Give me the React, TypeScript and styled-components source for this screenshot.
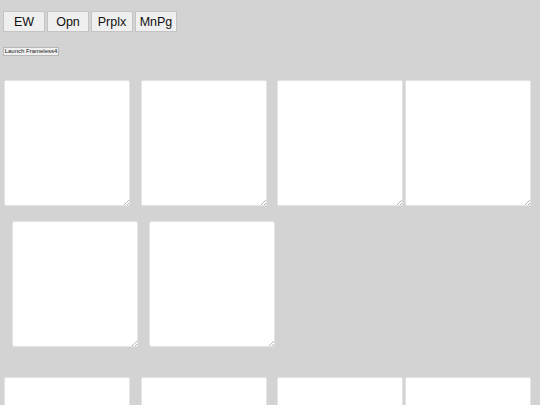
import styled, { createGlobalStyle } from 'styled-components'

const GlobalStyle = createGlobalStyle`
    html, body {
        margin: 0;
        padding: 0;
        background: #d3d3d3;
        font-family: "Liberation Sans", Arial, sans-serif;
    }
`

const Page = styled.div`
    display: flex;
    flex-direction: column;
    padding: 11px 0 0 3px;
`

const Toolbar = styled.div`
    display: flex;
    gap: 2px;
`

const NavButton = styled.button`
    width: 42px;
    height: 21px;
    padding: 0;
    background: #efefef;
    border: 1px solid #c4c4c4;
    font-family: "Liberation Sans", Arial, sans-serif;
    font-size: 12.5px;
    color: #111;
`

const LaunchButton = styled.button`
    align-self: flex-start;
    margin-top: 15px;
    width: 56px;
    height: 9px;
    padding: 0;
    background: #efefef;
    border: 1px solid #b8b8b8;
    font-family: "Liberation Sans", Arial, sans-serif;
    font-size: 6px;
    line-height: 7px;
    color: #222;
    white-space: nowrap;
    overflow: hidden;
`

const Row = styled.div<{ $top: number; $indent: number }>`
    display: flex;
    margin-top: ${(p) => p.$top}px;
    padding-left: ${(p) => p.$indent}px;
`

// small faint grip in the corner, like the one the frames show
const Frame = styled.div<{ $left: number }>`
    position: relative;
    box-sizing: border-box;
    flex: none;
    width: 126px;
    height: 126px;
    margin-left: ${(p) => p.$left}px;
    background: #fff;
    border: 1px solid #e4e4e4;
    border-radius: 2px;

    &::after {
        content: '';
        position: absolute;
        right: 0;
        bottom: 0;
        width: 5px;
        height: 5px;
        background: linear-gradient(
            135deg,
            transparent 0 45%,
            #b4b4b4 45% 55%,
            transparent 55% 72%,
            #b4b4b4 72% 82%,
            transparent 82%
        );
    }
`

const rows = [
    { top: 24, indent: 1, gaps: [0, 11, 10, 2] },
    { top: 15, indent: 9, gaps: [0, 11] },
    { top: 30, indent: 1, gaps: [0, 11, 10, 2] },
]

export default function App() {
    return (
        <>
            <GlobalStyle />
            <Page>
                <Toolbar>
                    {['EW', 'Opn', 'Prplx', 'MnPg'].map((label) => (
                        <NavButton key={label}>{label}</NavButton>
                    ))}
                </Toolbar>
                <LaunchButton>Launch Frameless4</LaunchButton>
                {rows.map((row, i) => (
                    <Row key={i} $top={row.top} $indent={row.indent}>
                        {row.gaps.map((g, j) => (
                            <Frame key={j} $left={g} />
                        ))}
                    </Row>
                ))}
            </Page>
        </>
    )
}
